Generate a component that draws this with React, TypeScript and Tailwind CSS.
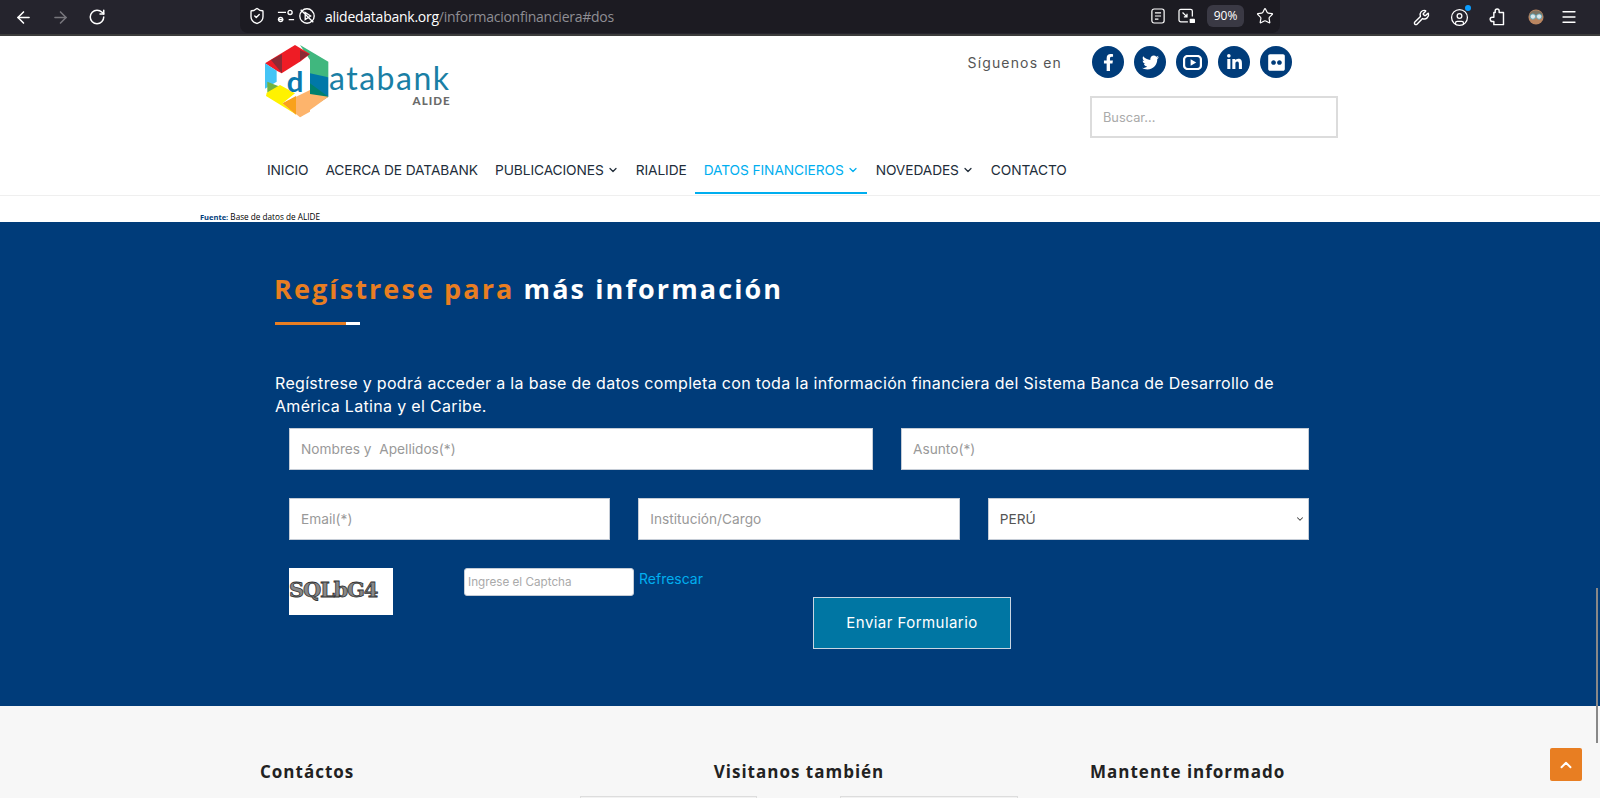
import { ArrowLeft, ArrowRight, RotateCw, ShieldCheck, Star, Wrench, CircleUser, Menu, ChevronDown, ChevronUp } from "lucide-react";
import { FaFacebookF, FaTwitter, FaLinkedinIn, FaFlickr } from "react-icons/fa";

const navItems = [
  { label: "INICIO" },
  { label: "ACERCA DE DATABANK" },
  { label: "PUBLICACIONES", caret: true },
  { label: "RIALIDE" },
  { label: "DATOS FINANCIEROS", caret: true, active: true },
  { label: "NOVEDADES", caret: true },
  { label: "CONTACTO" },
];

const inputClass =
  "h-[42px] w-full border border-[#c5ccd6] bg-white px-[11px] text-[13.7px] text-[#555] outline-none placeholder:text-[#999]";

const BrowserBar = () => (
  <div className="flex h-9 items-center border-b-2 border-[#3c3c3c] bg-[#25242d] text-white">
    <div className="flex w-[240px] items-center gap-[18px] pl-[14px]">
      <ArrowLeft className="h-[19px] w-[19px]" strokeWidth={2} />
      <ArrowRight className="h-[19px] w-[19px] text-[#77767c]" strokeWidth={2} />
      <RotateCw className="h-[18px] w-[18px]" strokeWidth={2} />
    </div>
    <div className="flex h-[33px] w-[1040px] -translate-y-[1px] items-center rounded-b-lg bg-[#1c1b22] pl-[8px] pr-[6px]">
      <ShieldCheck className="h-[18px] w-[18px]" strokeWidth={1.8} />
      <svg viewBox="0 0 20 20" className="ml-[11px] h-[18px] w-[18px]" fill="none" stroke="white" strokeWidth="1.5">
        <path d="M1 6h9M1 14h6M13 14h6" />
        <circle cx="14.5" cy="6" r="2.3" />
        <circle cx="4" cy="14" r="2.3" />
      </svg>
      <svg viewBox="0 0 20 20" className="ml-[3px] h-[18px] w-[18px]" fill="none" stroke="white" strokeWidth="1.5">
        <circle cx="10" cy="10" r="8" />
        <path d="M3 3l14 14M8 6v8l6-4z" />
      </svg>
      <div className="ml-[9px] font-['Open_Sans',sans-serif] text-[14px] tracking-[-0.25px]">
        alidedatabank.org<span className="text-[#8f8e94]">/informacionfinanciera#dos</span>
      </div>
      <div className="ml-auto flex items-center">
        <svg viewBox="0 0 16 18" className="h-[16px] w-[14px]" fill="none" stroke="white" strokeWidth="1.4">
          <rect x="1" y="1" width="14" height="16" rx="2.5" />
          <path d="M4.5 5.5h7M4.5 9h7M4.5 12.5h4" />
        </svg>
        <svg viewBox="0 0 20 18" className="ml-[13px] h-[16px] w-[18px]" fill="none" stroke="white" strokeWidth="1.4">
          <path d="M11 15.5H3a2 2 0 0 1-2-2v-10a2 2 0 0 1 2-2h11a2 2 0 0 1 2 2v6" />
          <path d="M5 5l5 5M10 6.5V10H6.5" />
          <rect x="13" y="12" width="6" height="5" rx="1" fill="white" stroke="none" />
        </svg>
        <div className="ml-[11px] flex h-[22px] w-[37px] items-center justify-center rounded-md bg-[#3a3944] font-['Open_Sans',sans-serif] text-[12px]">
          90%
        </div>
        <Star className="ml-[12px] h-[18px] w-[18px]" strokeWidth={1.6} />
      </div>
    </div>
    <div className="flex flex-1 items-center pl-[133px]">
      <Wrench className="h-[17px] w-[17px]" strokeWidth={2} />
      <span className="relative ml-[20px]">
        <CircleUser className="h-[19px] w-[19px]" strokeWidth={1.6} />
        <span className="absolute -right-[2px] -top-[3px] h-[6px] w-[6px] rounded-full bg-[#0a9dff]" />
      </span>
      <svg viewBox="0 0 20 20" className="ml-[19px] h-[18px] w-[18px]" fill="none" stroke="white" strokeWidth="1.6" strokeLinejoin="round">
        <path d="M8 5V3.4a2.2 2.2 0 0 1 4.4 0V5h4.8v13.5H6.5V15H4.8a2.4 2.4 0 0 1 0-4.8h1.7V5z" />
      </svg>
      <svg viewBox="0 0 18 20" className="ml-[22px] h-[18px] w-[16px]">
        <circle cx="9" cy="10" r="8.5" fill="#b98560" />
        <path d="M1 8a8.5 8 0 0 1 16 0z" fill="#7d7463" />
        <circle cx="5.5" cy="9.5" r="3" fill="#dbe7ea" stroke="#5ea6b8" />
        <circle cx="12.5" cy="9.5" r="3" fill="#dbe7ea" stroke="#5ea6b8" />
      </svg>
      <Menu className="ml-[16px] h-[18px] w-[18px]" strokeWidth={1.7} />
    </div>
  </div>
);

const Logo = () => (
  <div className="-ml-[3px] -mt-[4px] flex items-start">
    <svg viewBox="0 0 225 240" className="h-[80px] w-[75px] shrink-0">
      <polygon points="120,15 205,65 205,112 150,112 150,60" fill="#40b77e" />
      <polygon points="15,70 105,15 150,42 122,64 65,100 50,92" fill="#ee1c25" />
      <polygon points="33,60 66,42 66,100" fill="#8c2a34" />
      <polygon points="120,30 148,43 120,62" fill="#8c2a34" />
      <polygon points="150,100 205,112 205,170 150,190" fill="#0078a8" />
      <polygon points="150,130 205,170 150,205" fill="#00806e" />
      <polygon points="15,70 50,92 50,125 15,146" fill="#45c4f5" />
      <polygon points="22,125 60,140 22,158" fill="#72b340" />
      <polygon points="20,158 60,135 105,160 68,190 112,226 18,168" fill="#fff200" />
      <polygon points="120,232 150,162 205,170" fill="#fdb46c" />
      <polygon points="68,190 150,150 150,215 120,232" fill="#fdb46c" />
      <polygon points="68,190 108,168 108,224" fill="#f9a11b" />
      <text x="80" y="156" fontSize="88" fontWeight="700" fill="#0a78ad" fontFamily="Lato, sans-serif">d</text>
    </svg>
    <div className="-ml-[6px] flex flex-col items-end pt-[25px]">
      <span className="font-['Lato',sans-serif] text-[32px] font-normal leading-[26px] tracking-[1.5px] text-[#1a7fa5]">atabank</span>
      <span className="mt-[4px] font-['Lato',sans-serif] text-[11.5px] font-black leading-[12px] tracking-[1px] text-[#6a6a6a]">ALIDE</span>
    </div>
  </div>
);

const Social = () => (
  <div className="flex gap-[10px]">
    {[FaFacebookF, FaTwitter].map((Icon, i) => (
      <span key={i} className="flex h-8 w-8 items-center justify-center rounded-full bg-[#003c7a] text-white">
        <Icon className="h-[17px] w-[17px]" />
      </span>
    ))}
    <span className="flex h-8 w-8 items-center justify-center rounded-full bg-[#003c7a]">
      <svg viewBox="0 0 20 16" className="h-[15px] w-[19px]">
        <rect x="1" y="1" width="18" height="14" rx="4" fill="none" stroke="white" strokeWidth="2.4" />
        <polygon points="8,4.5 14,8 8,11.5" fill="white" />
      </svg>
    </span>
    <span className="flex h-8 w-8 items-center justify-center rounded-full bg-[#003c7a] text-white">
      <FaLinkedinIn className="h-[17px] w-[17px]" />
    </span>
    <span className="flex h-8 w-8 items-center justify-center rounded-full bg-[#003c7a] text-white">
      <FaFlickr className="h-[19px] w-[19px]" />
    </span>
  </div>
);

const Header = () => (
  <header className="h-[160px] border-b border-[#efefef] bg-white font-['Inter',sans-serif]">
    <div className="flex h-[115px] justify-between pl-[263px] pr-[262px] pt-2">
      <Logo />
      <div className="flex flex-col items-end pt-[2px]">
        <div className="flex items-center">
          <span className="mr-[30px] text-[14px] tracking-[1.15px] text-[#555]">Síguenos en</span>
          <Social />
          <span className="w-[46px]" />
        </div>
        <input placeholder="Buscar..." className="mt-[18px] h-[42px] w-[248px] border-2 border-[#dcdcdc] bg-white px-[11px] text-[12.8px] outline-none placeholder:text-[#aaa]" />
      </div>
    </div>
    <nav className="flex h-[43px] pl-[258.5px] text-[13.75px] tracking-[-0.1px] text-[#222d3a]">
      {navItems.map((item) => (
        <a
          key={item.label}
          className={`flex h-[43px] items-center gap-[3px] border-b-2 px-[8.5px] pb-[3px] ${item.active ? "border-[#00aeef] text-[#00aeef]" : "border-transparent"}`}
        >
          {item.label}
          {item.caret && <ChevronDown className="h-[12px] w-[12px]" strokeWidth={2.5} />}
        </a>
      ))}
    </nav>
  </header>
);

const Register = () => (
  <section className="h-[484px] bg-[#003c7a] pl-[275px] font-['Inter',sans-serif]">
    <h2 className="-ml-[1px] pt-[47px] font-['Open_Sans',sans-serif] text-[27px] font-bold leading-[40px] tracking-[2.1px] text-white">
      <span className="text-[#e87e22]">Regístrese para</span> más información
    </h2>
    <div className="mt-[13px] flex h-[3px] w-[85px]">
      <span className="w-[71px] bg-[#e87e22]" />
      <span className="flex-1 bg-white" />
    </div>
    <p className="mt-[47px] w-[1030px] text-[16px] leading-[23px] tracking-[0.32px] text-white">
      Regístrese y podrá acceder a la base de datos completa con toda la información financiera del Sistema Banca de Desarrollo de América Latina y el Caribe.
    </p>
    <div className="ml-[14px] mt-[10px] w-[1020px]">
      <div className="grid grid-cols-[584px_408px] gap-x-[28px]">
        <input placeholder="Nombres y  Apellidos(*)" className={inputClass} />
        <input placeholder="Asunto(*)" className={inputClass} />
      </div>
      <div className="mt-[28px] grid grid-cols-3 gap-x-[28px]">
        <input placeholder="Email(*)" className={inputClass} />
        <input placeholder="Institución/Cargo" className={inputClass} />
        <div className="relative">
          <select className={`${inputClass} appearance-none`} defaultValue="PERÚ">
            <option>PERÚ</option>
          </select>
          <ChevronDown className="absolute right-[4px] top-[16px] h-[10px] w-[10px] text-[#444]" strokeWidth={2.5} />
        </div>
      </div>
      <div className="mt-[28px] flex items-start">
        <div className="flex h-[47px] w-[104px] items-center bg-white pb-[4px] font-['DejaVu_Serif',serif] text-[21px] font-bold leading-none tracking-[-1.2px] text-[#888] [-webkit-text-stroke:0.8px_#333]">
          SQLbG4
        </div>
        <input placeholder="Ingrese el Captcha" className="ml-[71px] h-[28px] w-[170px] rounded-[3px] border border-[#c5ccd6] bg-white px-[3px] text-[11.7px] outline-none placeholder:text-[#aaa]" />
        <a className="ml-[5px] text-[14px] leading-[22px] text-[#00aeef]">Refrescar</a>
        <button className="ml-[110px] mt-[29px] h-[52px] w-[198px] border border-[#c9d6e2] bg-[#0076a3] text-[15px] tracking-[0.45px] text-white">
          Enviar Formulario
        </button>
      </div>
    </div>
  </section>
);

const Footer = () => (
  <footer className="flex h-[92px] bg-[#f7f7f7] pl-[260px] pt-[53px] font-['Open_Sans',sans-serif] text-[17px] font-bold leading-[26px] tracking-[1px] text-[#222]">
    <div className="w-[320px]">Contáctos</div>
    <div className="w-[438px]">
      <div className="text-center">Visitanos también</div>
      <div className="mt-[11px] flex justify-between">
        <span className="h-[20px] w-[177px] border border-[#ddd] bg-[#f2f2f2]" />
        <span className="h-[20px] w-[178px] border border-[#ddd] bg-[#f2f2f2]" />
      </div>
    </div>
    <div className="ml-[72px]">Mantente informado</div>
  </footer>
);

export default function App() {
  return (
    <div className="relative h-[798px] w-[1600px] overflow-hidden bg-white">
      <BrowserBar />
      <Header />
      <div className="flex h-[26px] items-baseline bg-white pl-[200px] pt-[15px] font-['Open_Sans',sans-serif] text-[8.2px] font-medium leading-[11px] text-black">
        <span className="text-[7.5px] font-bold text-[#003c7a]">Fuente:</span>&nbsp;Base de datos de ALIDE
      </div>
      <Register />
      <Footer />
      <div className="absolute left-[1596px] top-[588px] h-[155px] w-[2px] bg-[#888]" />
      <div className="absolute left-[1550px] top-[748px] flex h-[33px] w-[32px] items-center justify-center rounded-[2px] bg-[#e87e22] text-white">
        <ChevronUp className="h-[18px] w-[18px]" strokeWidth={2.5} />
      </div>
    </div>
  );
}
